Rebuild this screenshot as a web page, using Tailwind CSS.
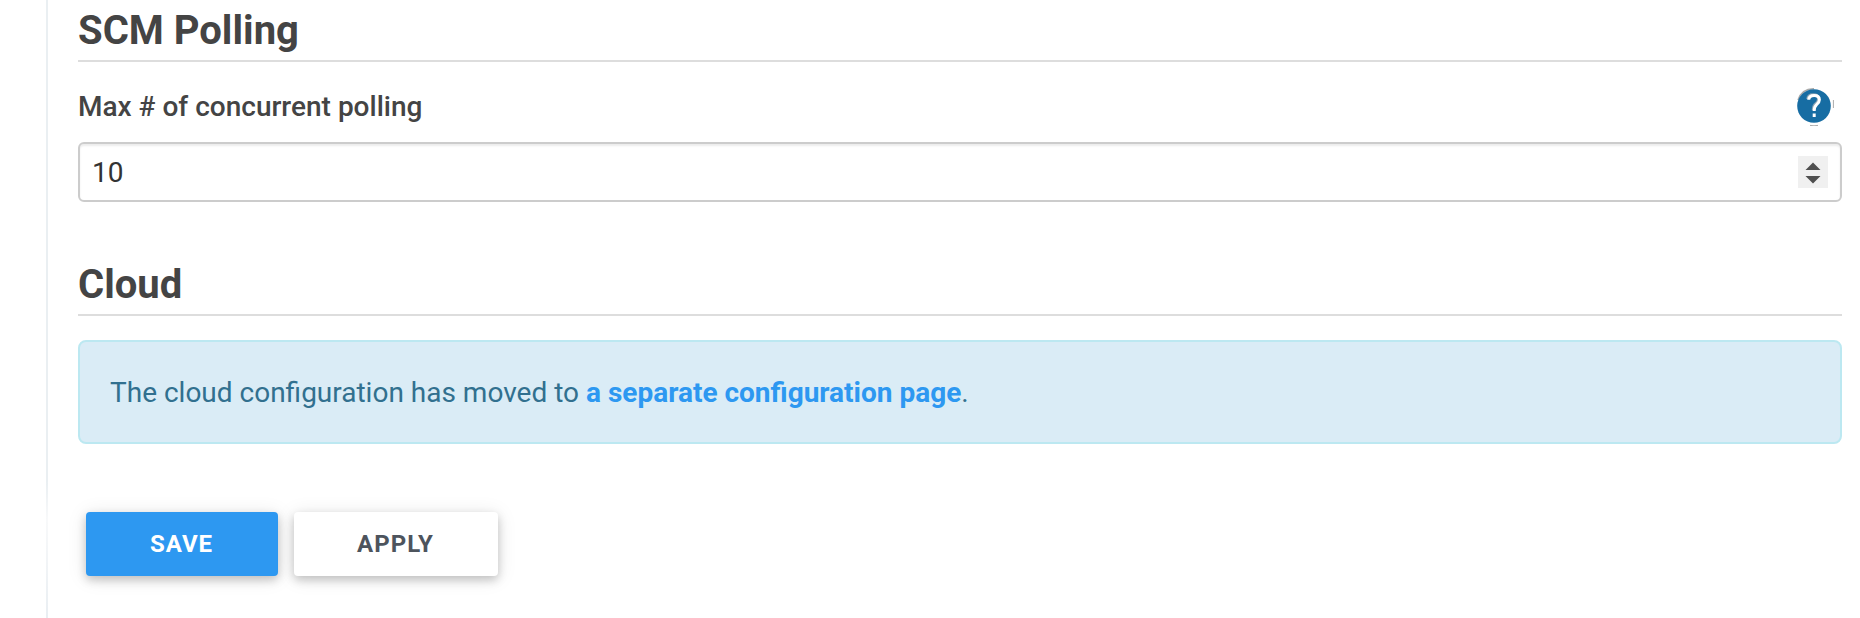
<!DOCTYPE html>
<html lang="en">
<head>
<meta charset="utf-8">
<title>Configure System</title>
<script src="https://cdn.jsdelivr.net/npm/@tailwindcss/browser@4"></script>
</head>
<body class="bg-white font-['Roboto',sans-serif] text-[28px] text-[#444]">
<div class="flex h-[618px] overflow-hidden pl-[46px]">
  <div class="w-[2px] shrink-0 bg-linear-to-b from-[#eaeff2] from-[78%] via-[#f8f9fa] via-[84%] to-[#e9eef2]"></div>
  <main class="flex w-[1794px] flex-col pl-[30px]">
    <h2 class="h-[62px] shrink-0 border-b-2 border-[#ddd] pt-[7px] text-[40px] leading-[48px] font-bold">SCM Polling</h2>
    <div class="mt-[24px] flex h-[40px] shrink-0 items-center justify-between pr-[8px]">
      <label class="pt-[2px] leading-[40px] font-medium">Max # of concurrent polling</label>
      <svg width="40" height="40" viewBox="0 0 40 40" fill="none">
        <path d="M4 14Q8 2.5 20 2.8" stroke="#aaa" stroke-width="1.5"/>
        <circle cx="20" cy="20" r="16.8" fill="#176da3"/>
        <path d="M14.7 13.8Q14.9 9.4 20.2 9.4Q25.4 9.4 25.4 13.8Q25.4 16.4 22.6 18.6Q20.2 20.6 20.2 25" stroke="#8aa3b3" stroke-width="2.8" transform="translate(-1 -.8)"/>
        <path d="M14.7 13.8Q14.9 9.4 20.2 9.4Q25.4 9.4 25.4 13.8Q25.4 16.4 22.6 18.6Q20.2 20.6 20.2 25M20.2 27.6V31" stroke="#fff" stroke-width="3"/>
        <path d="M16 39.4Q20 40.2 24 39.4M39.4 14V22" stroke="#aaa" stroke-width="1"/>
      </svg>
    </div>
    <div class="mt-[16px] flex h-[60px] shrink-0 items-center justify-between rounded-[6px] border-2 border-[#ccc] bg-white pr-[12px] pl-[12px] text-[#333] shadow-[inset_0_2px_2px_rgba(0,0,0,0.075)]">
      <span class="pt-[2px] leading-[40px]">10</span>
      <svg width="30" height="32" viewBox="0 0 30 32"><path fill="#f0f0f0" d="M0 0h30v32H0z"/><path fill="#4f4f4f" d="M7.5 14h15l-7.5-7.5zM7.5 20h15l-7.5 7.5z"/></svg>
    </div>
    <h2 class="mt-[52px] h-[62px] shrink-0 border-b-2 border-[#ddd] pt-[7px] text-[40px] leading-[48px] font-bold">Cloud</h2>
    <div class="mt-[24px] flex h-[104px] shrink-0 items-center rounded-[8px] border-2 border-[#bce8f1] bg-[#daecf6] pl-[30px] text-[#31708f]">
      <p class="pt-[2px] leading-[40px]">The cloud configuration has moved to <a class="font-bold text-[#2d98f1]">a separate configuration page</a>.</p>
    </div>
    <div class="mt-[68px] flex gap-[16px] pl-[8px] text-[24px] font-bold tracking-[1px]">
      <button class="h-[64px] w-[192px] rounded-[4px] bg-[#2d98f1] pr-[1px] text-white shadow-[0_4px_10px_rgba(0,0,0,0.2),0_2px_20px_rgba(0,0,0,0.1)]">SAVE</button>
      <button class="h-[64px] w-[204px] rounded-[4px] bg-white pr-[1px] text-[#4d545d] shadow-[0_4px_10px_rgba(0,0,0,0.2),0_2px_20px_rgba(0,0,0,0.1)]">APPLY</button>
    </div>
  </main>
</div>
</body>
</html>
